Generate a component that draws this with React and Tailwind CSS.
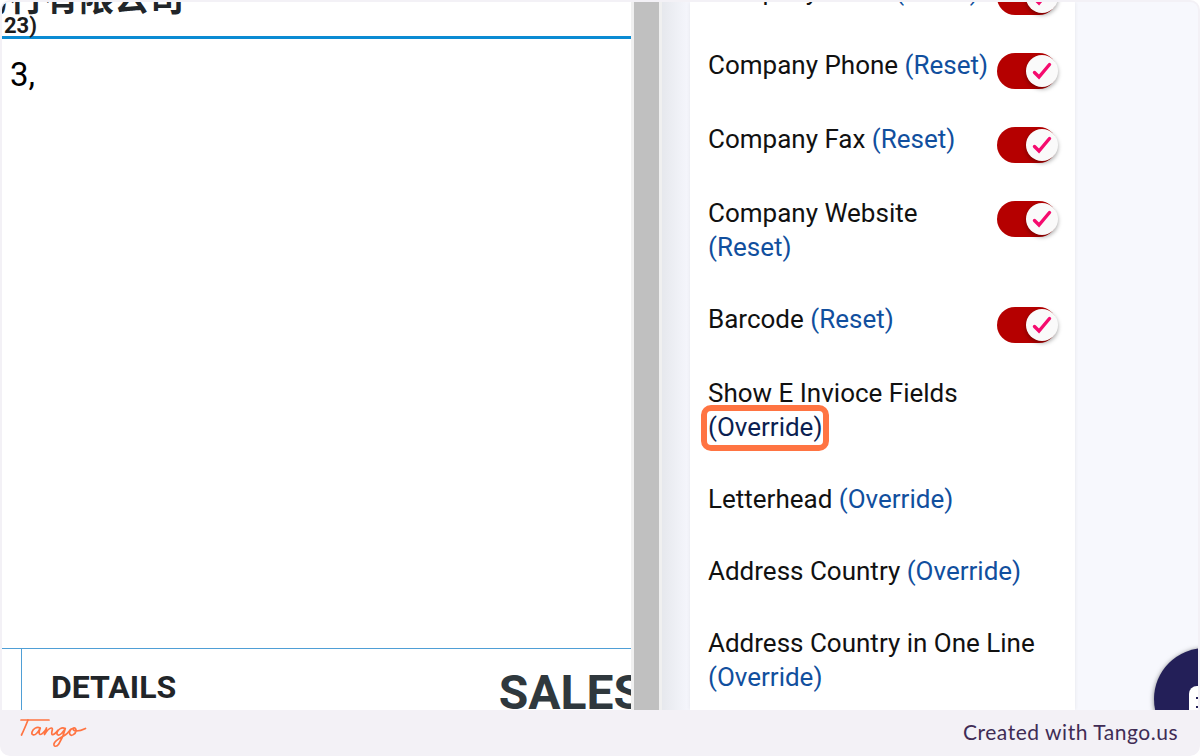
import React from 'react';

const fields = [
  { id: 'email', label: 'Company Email', action: 'Reset', toggle: true },
  { id: 'phone', label: 'Company Phone', action: 'Reset', toggle: true },
  { id: 'fax', label: 'Company Fax', action: 'Reset', toggle: true },
  { id: 'website', label: 'Company Website', action: 'Reset', toggle: true },
  { id: 'barcode', label: 'Barcode', action: 'Reset', toggle: true },
  { id: 'einvoice', label: 'Show E Invioce Fields', action: 'Override', highlight: true },
  { id: 'letterhead', label: 'Letterhead', action: 'Override' },
  { id: 'country', label: 'Address Country', action: 'Override' },
  { id: 'country-line', label: 'Address Country in One Line', action: 'Override' },
];

const Toggle = ({ id }) => (
  <span className="relative mt-[5px] block h-9 w-[62px] shrink-0">
    <input
      id={id}
      type="checkbox"
      defaultChecked
      className="block h-9 w-[60px] cursor-pointer appearance-none rounded-full bg-[#b50000]"
    />
    <span className="pointer-events-none absolute top-[2px] right-px flex size-8 items-center justify-center rounded-full bg-[#fafafa] shadow-[0_2px_4px_rgba(0,0,0,0.35)]">
      <svg viewBox="0 0 20 18" className="h-[18px] w-5" fill="none" stroke="#f50b6e" strokeWidth="3.4">
        <path d="M2.500 10.500 7 15 17.500 2.500" strokeLinecap="round" />
      </svg>
    </span>
  </span>
);

const FieldRow = ({ field }) => (
  <li className={field.toggle ? 'flex min-h-[74px] justify-between' : 'flex'}>
    <div className="min-w-0 pb-[38px]">
      <label htmlFor={field.toggle ? field.id : undefined}>{field.label}</label>{' '}
      <a
        href="#"
        className={
          field.highlight
            ? 'relative inline-block text-[#0b1f52]'
            : 'inline-block text-[#114f9e]'
        }
      >
        ({field.action})
        {field.highlight && (
          <span className="absolute -top-[5px] -right-[7px] -bottom-[7px] -left-[7px] rounded-[10px] border-6 border-[#ff7442]"></span>
        )}
      </a>
    </div>
    {field.toggle && <Toggle id={field.id} />}
  </li>
);

const InvoicePreview = () => (
  <section className="flex min-w-0 flex-1 flex-col overflow-hidden bg-white text-[#212529]">
    <header className="h-[37px] shrink-0 border-b-3 border-[#0b8bd3] whitespace-nowrap">
      <h1 className="-mt-6 -ml-7 h-[38px] font-['Noto_Sans_CJK_SC',sans-serif] text-[35px] leading-9 font-bold">
        易行有限公司
      </h1>
      <p className="pl-[2px] text-[22px] leading-5 font-bold text-[#1c1c1c]">23)</p>
    </header>
    <p className="pt-4 pl-2 text-[33px] leading-10 text-black">3,</p>
    <div className="mt-auto flex h-[62px] shrink-0 border-t border-[#4f9fd6]">
      <div className="w-5 shrink-0 border-r border-[#4f9fd6]"></div>
      <div className="flex min-w-0 flex-1 items-start justify-between pl-[29px] font-bold">
        <h2 className="pt-[18px] text-[32px] leading-10">DETAILS</h2>
        <h2 className="-mr-3 pt-4 text-[48px] leading-14 text-[#2f383d]">SALES</h2>
      </div>
    </div>
  </section>
);

const TangoLogo = () => (
  <svg viewBox="0 0 70 32" className="h-8 w-[70px]" fill="none" stroke="#ff7442" strokeWidth="1.7" strokeLinecap="round" strokeLinejoin="round" role="img" aria-label="Tango">
    <path d="M2 4H30" />
    <path d="M9 4C7 9 5 14 2.500 19" />
    <path d="M21 12c-3-2-7 1-8 4-.8 3 2 4 4.500 1.500 2-2 3-4 3.800-5.500-1 3-2 6-.3 6.500 1.800.3 5-3 6.500-6.500-.4 2.500-1 4.500-2 6.500 2.500-4 5-6.800 7-6.500 2.300.4-.8 4.500.4 6.300 1.400 1.200 4-1.300 5.800-3.800" />
    <path d="M46 12.500c-3-2-7 1-8 4-.6 2.800 2 3.500 4.500 1 1.800-1.800 3-3.500 3.800-5-1.200 5-3.500 11-6.500 15.500-2 3-5.500 3-4.800-.2.8-3.500 7-6 11.500-9 2.500-1.800 3.500-3.500 5-5.300" />
    <path d="M54.500 12c-3 .5-5 4.500-3.500 6.500s5.500-.5 6-3.500c.4-2-1-3.500-2.500-3-1.200 1 0 3 3 3 3.500 0 6-1 9-2.500" />
  </svg>
);

const App = () => {
  return (
    <div className="flex h-screen flex-col overflow-hidden rounded-[10px] bg-[#f3f1f6] font-[Roboto,sans-serif]">
      <main className="relative mx-[2px] mt-[2px] flex min-h-0 flex-1 overflow-hidden rounded-t-lg bg-[#f7f8fd]">
        <InvoicePreview />
        <div className="w-[31px] shrink-0 border-x-3 border-[#f0f0f0] bg-[#c0c0c0]"></div>
        <div className="w-7 shrink-0 bg-linear-to-r from-[#e6e8ed] to-[#f6f7fd]"></div>
        <section className="w-[385px] shrink-0 overflow-hidden bg-white pr-4 pl-[18px] text-[26px] leading-[34px] text-[#111111] shadow-[0_0_4px_rgba(0,0,0,0.08)]">
          <ul className="-mt-7">
            {fields.map((field) => (
              <FieldRow key={field.id} field={field} />
            ))}
          </ul>
        </section>
        <div className="w-[123px] shrink-0"></div>
        <button
          type="button"
          aria-label="Open chat"
          className="absolute -right-[58px] -bottom-[40px] size-[102px] rounded-full bg-[#231f58] shadow-[0_1px_5px_rgba(0,0,0,0.5)]"
        >
          <svg viewBox="0 0 102 102" className="size-full">
            <rect x="35" y="38" width="36" height="32" rx="8" fill="#fff" />
            <path d="M42 50h6M42 59h6" stroke="#231f58" strokeWidth="2" />
          </svg>
        </button>
      </main>
      <footer className="flex h-[46px] shrink-0 items-center justify-between pr-[22px] pb-[2px] pl-[19px]">
        <TangoLogo />
        <a href="#" className="font-[Lato,sans-serif] text-[21px] tracking-wide text-[#402c55]">
          Created with Tango.us
        </a>
      </footer>
    </div>
  );
};

export default App;
